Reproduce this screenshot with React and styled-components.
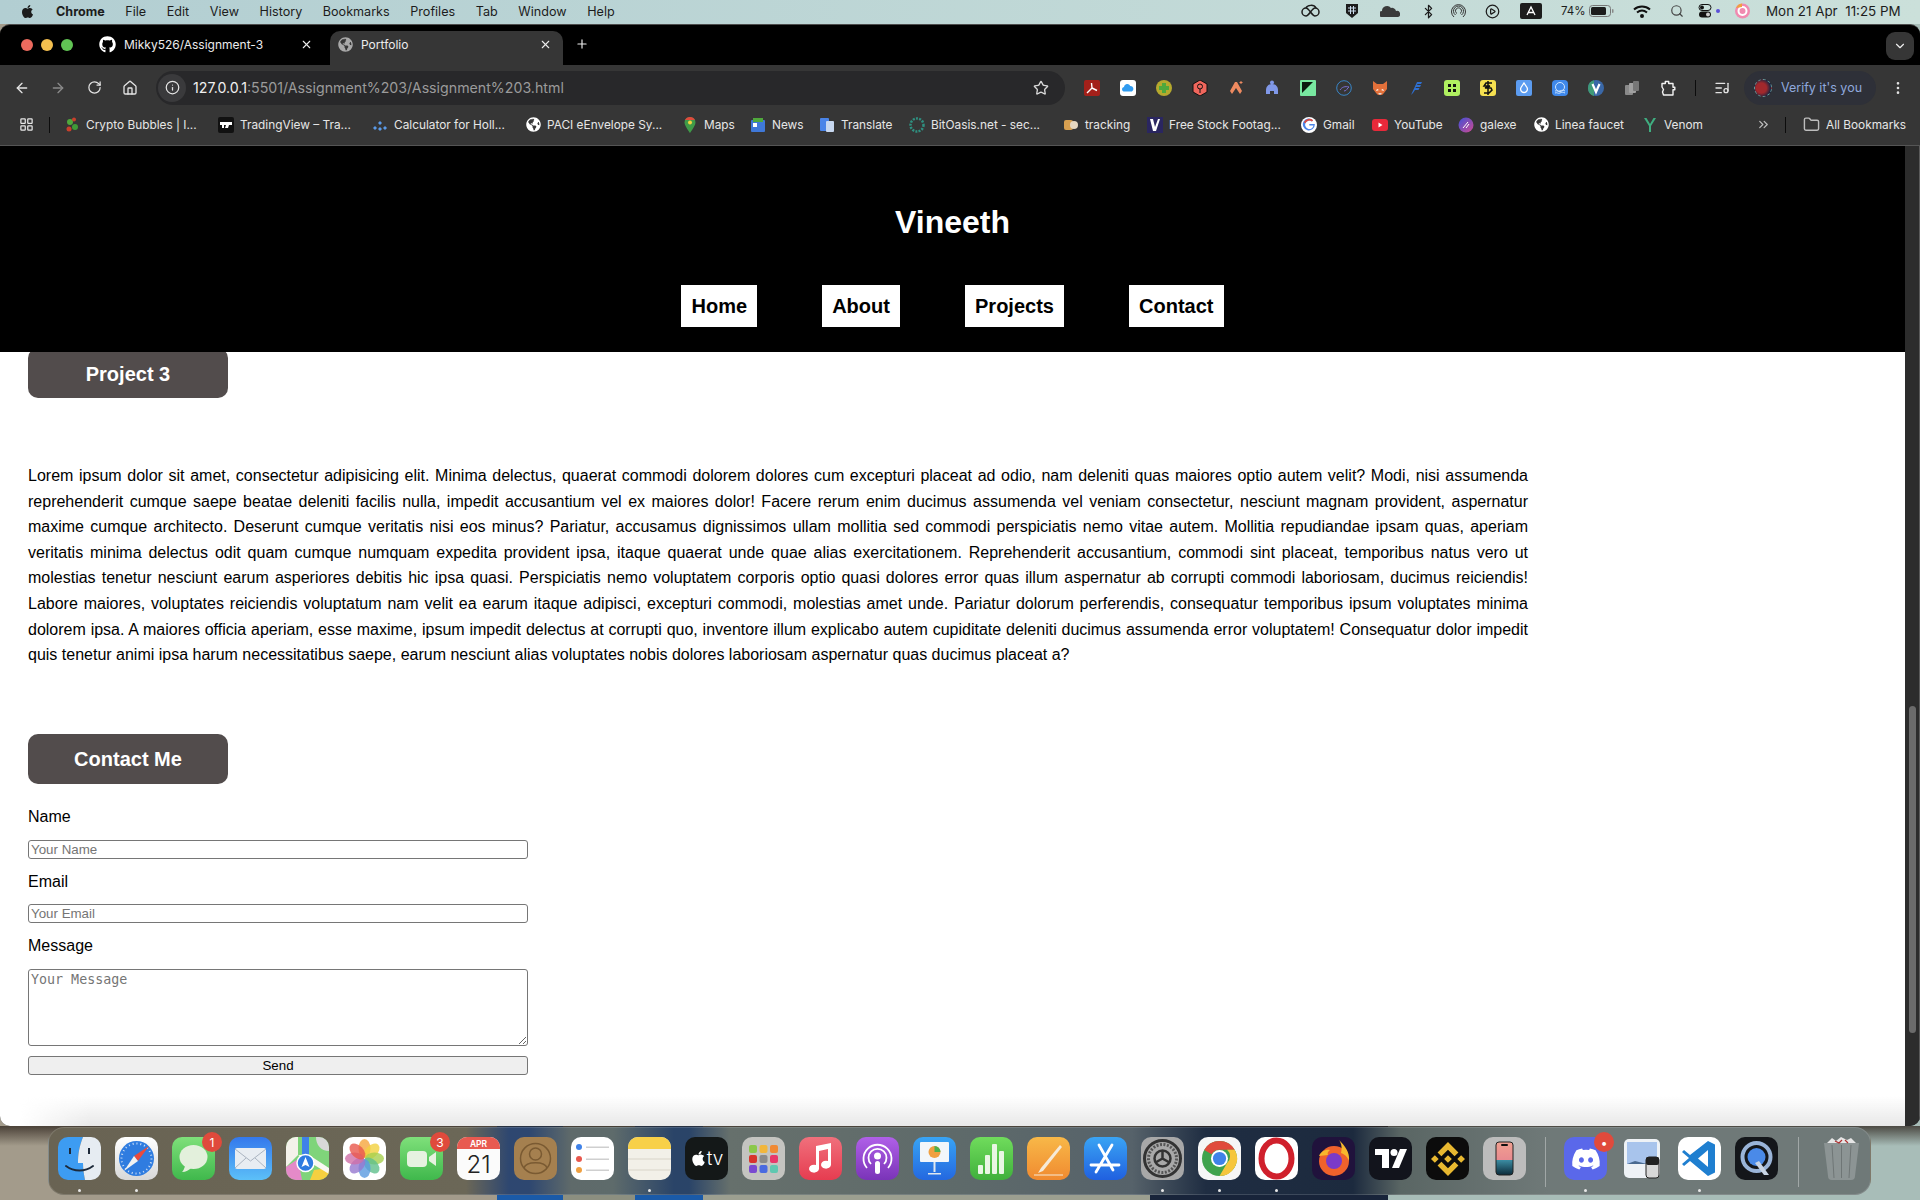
import React from 'react';
import styled, { createGlobalStyle } from 'styled-components';
import { ArrowLeft, ArrowRight, RotateCw, House, Star, Info, Plus, X, ChevronDown, Search, Bluetooth, EllipsisVertical, Folder, ChevronsRight, LayoutGrid, ListMusic, CirclePlay } from 'lucide-react';
import { FaApple, FaGithub, FaDiscord, FaGlobeAmericas } from 'react-icons/fa';
import { SiBinance } from 'react-icons/si';

const GlobalStyle = createGlobalStyle`
  html, body { margin: 0; padding: 0; }
  body { font-family: "Liberation Sans", Arial, sans-serif; background: #000; }
  * { box-sizing: border-box; }
`;

const uiFont = '"Inter", "Liberation Sans", sans-serif';

const Desktop = styled.div`
  width: 1920px;
  height: 1200px;
  overflow: hidden;
  display: flex;
  flex-direction: column;
  background:
    linear-gradient(180deg, rgba(45,35,28,0.75) 0, rgba(45,35,28,0) 20px) 0 1126px / 100% 74px no-repeat,
    linear-gradient(90deg, #a39b8b 0, #a39b8b 497px, #1a5aa8 497px, #1a5aa8 563px, #8c8f80 563px, #8c8f80 635px, #1a5aa8 635px, #1a5aa8 703px, #9c9f90 703px, #9c9f90 1150px, #18243a 1150px, #18243a 1388px, #a8bdb8 1388px);
`;

const MenuBar = styled.div`
  height: 24px;
  flex: none;
  display: flex;
  align-items: center;
  padding: 0 18px 2px 20px;
  background: linear-gradient(90deg, #b2ced2, #cbe0da);
  font-family: ${uiFont};
  font-size: 12.6px;
  color: #1c1c1c;
`;

const MenuItems = styled.div`
  display: flex;
  align-items: center;
  gap: 20.6px;
  margin-left: 21px;
`;

const MenuLabel = styled.span`
  font-weight: ${(p) => (p.$bold ? 700 : 400)};
`;

const StatusArea = styled.div`
  margin-left: auto;
  display: flex;
  align-items: center;
  color: #1c1c1c;
`;

const StatusSlot = styled.span`
  width: ${(p) => p.$w}px;
  flex: none;
  display: flex;
  align-items: center;
  font-size: ${(p) => p.$size || 12.5}px;
  white-space: nowrap;
`;

const Window = styled.div`
  height: 1102px;
  flex: none;
  display: flex;
  flex-direction: column;
  overflow: hidden;
  border-radius: 10px;
  border-top: 1px solid #4d4d4d;
  background: #363636;
`;

const TabStrip = styled.div`
  height: 40px;
  flex: none;
  display: flex;
  align-items: flex-end;
  background: #000;
  padding-left: 21px;
  font-family: ${uiFont};
  font-size: 12px;
  color: #ececec;
`;

const Lights = styled.div`
  display: flex;
  gap: 8px;
  align-self: flex-start;
  margin: 14px 18px 0 0;
`;

const Light = styled.span`
  width: 12px;
  height: 12px;
  border-radius: 50%;
  background: ${(p) => p.$c};
`;

const Tab = styled.div`
  width: 233px;
  height: 34px;
  margin-right: ${(p) => (p.$active ? 12 : 6)}px;
  padding: 0 11px 8px 8px;
  display: flex;
  align-items: center;
  gap: 8px;
  border-radius: 10px 10px 0 0;
  background: ${(p) => (p.$active ? '#363636' : 'transparent')};
`;

const TabTitle = styled.span`
  flex: 1;
  white-space: nowrap;
`;

const NewTab = styled.span`
  display: flex;
  height: 34px;
  padding-bottom: 8px;
  align-items: center;
  color: #eee;
`;

const TabMenu = styled.span`
  margin: 7px 6px 0 auto;
  align-self: flex-start;
  width: 28px;
  height: 28px;
  border-radius: 9px;
  background: #363636;
  display: flex;
  align-items: center;
  justify-content: center;
  color: #eee;
`;

const Toolbar = styled.div`
  height: 43px;
  flex: none;
  display: flex;
  align-items: center;
  padding-left: 4px;
  padding-top: 2px;
  background: #363636;
`;

const ToolBtn = styled.span`
  width: 36px;
  height: 34px;
  flex: none;
  display: flex;
  align-items: center;
  justify-content: center;
  color: ${(p) => p.$c || '#e3e3e3'};
`;

const UrlBar = styled.div`
  width: 909px;
  height: 34px;
  flex: none;
  margin: 0 9px 0 8px;
  padding-left: 2px;
  display: flex;
  align-items: center;
  border-radius: 17px;
  background: #28282a;
  font-family: ${uiFont};
  font-size: 14.2px;
  color: #f0f0f0;
`;

const InfoDot = styled.span`
  width: 28px;
  height: 28px;
  margin-right: 7px;
  border-radius: 50%;
  background: #3a3a3c;
  display: flex;
  align-items: center;
  justify-content: center;
  color: #e3e3e3;
`;

const UrlRest = styled.span`
  color: #9b9b9b;
`;

const UrlStar = styled.span`
  margin-left: auto;
  margin-right: 16px;
  display: flex;
  color: #d8d8d8;
`;

const Divider = styled.span`
  width: 1px;
  height: ${(p) => p.$h || 16}px;
  flex: none;
  margin: ${(p) => p.$m || '0'};
  background: #0c0c0c;
`;

const VerifyPill = styled.div`
  width: 132px;
  height: 34px;
  flex: none;
  margin: 0 4px;
  padding-left: 10px;
  display: flex;
  align-items: center;
  gap: 9px;
  border-radius: 17px;
  background: #2e3038;
  font-family: ${uiFont};
  font-size: 12.5px;
  color: #8fa8dc;
  white-space: nowrap;
`;

const Avatar = styled.span`
  width: 18px;
  height: 18px;
  flex: none;
  border-radius: 50%;
  border: 1px dashed #6aa0a0;
  background: radial-gradient(circle at 40% 50%, #a2282c 40%, #1a2440 75%);
`;

const BookmarkBar = styled.div`
  height: 38px;
  flex: none;
  display: flex;
  align-items: center;
  padding: 0 14px 4px 19px;
  background: #363636;
  border-bottom: 1px solid #555;
  font-family: ${uiFont};
  font-size: 11.85px;
  color: #e6e6e6;
`;

const BookmarkItem = styled.div`
  width: ${(p) => p.$w}px;
  flex: none;
  display: flex;
  align-items: center;
  gap: 6px;
  white-space: nowrap;
`;

const BookmarkRight = styled.div`
  margin-left: auto;
  display: flex;
  align-items: center;
  color: #bdbdbd;
`;

const AllBookmarks = styled.span`
  width: 86px;
  padding-left: 6px;
  color: #e6e6e6;
  white-space: nowrap;
`;

const PageArea = styled.div`
  flex: 1;
  display: flex;
  min-height: 0;
`;

const Page = styled.div`
  flex: 1;
  position: relative;
  overflow: hidden;
  background: #fff;
  color: #000;
  &::after {
    content: '';
    position: absolute;
    left: 0;
    right: 0;
    bottom: 0;
    height: 30px;
    background: linear-gradient(180deg, rgba(232,232,232,0), #e8e8e8);
    -webkit-mask-image: linear-gradient(90deg, transparent 20px, #000 90px);
    mask-image: linear-gradient(90deg, transparent 20px, #000 90px);
  }
`;

const Header = styled.header`
  position: relative;
  z-index: 1;
  height: 206px;
  padding-top: 58px;
  background: #000;
  text-align: center;
`;

const Name = styled.h1`
  margin: 0 0 44px;
  font-size: 32px;
  line-height: 37px;
  font-weight: 700;
  color: #fff;
`;

const Nav = styled.nav`
  display: flex;
  justify-content: center;
  gap: 64.5px;
`;

const NavLink = styled.a`
  height: 42px;
  padding: 0 10.3px;
  display: flex;
  align-items: center;
  background: #fff;
  color: #000;
  font-size: 20px;
  font-weight: 700;
`;

const Main = styled.main`
  margin-top: -4px;
  padding: 0 28px;
`;

const SectionTitle = styled.h2`
  width: 200px;
  height: 50px;
  margin: 0;
  padding-top: 2px;
  display: flex;
  align-items: center;
  justify-content: center;
  border-radius: 10px;
  background: #524c4c;
  color: #fff;
  font-size: 20px;
  font-weight: 700;
`;

const Lorem = styled.p`
  width: 1500px;
  margin: 65px 0 66px;
  font-size: 16px;
  line-height: 25.6px;
  text-align: justify;
`;

const ContactForm = styled.form`
  width: 500px;
  margin-top: 24.5px;
  display: flex;
  flex-direction: column;
`;

const FieldLabel = styled.label`
  height: 18px;
  margin-bottom: 13.5px;
  font-size: 16px;
  line-height: 18px;
`;

const TextField = styled.input`
  width: 100%;
  height: 19px;
  margin: 0 0 14px;
  padding: 1px 2px;
  border: 1px solid #767676;
  border-radius: 3px;
  background: #fff;
  font-family: "Liberation Sans", Arial, sans-serif;
  font-size: 13.33px;
  &::placeholder { color: #757575; }
`;

const MessageField = styled.textarea`
  width: 100%;
  height: 77px;
  margin: 0 0 10px;
  padding: 2px;
  border: 1px solid #767676;
  border-radius: 3px;
  background: #fff;
  font-family: "DejaVu Sans Mono", monospace;
  font-size: 13.33px;
  display: block;
  &::placeholder { color: #757575; }
`;

const SendButton = styled.button`
  width: 100%;
  height: 19px;
  padding: 0;
  border: 1px solid #767676;
  border-radius: 3px;
  background: #efefef;
  color: #000;
  font-family: "Liberation Sans", Arial, sans-serif;
  font-size: 13.33px;
`;

const ScrollTrack = styled.div`
  width: 15px;
  flex: none;
  padding: 560px 3px 0 4px;
  background: #2c2c2c;
  border-right: 1px solid #5a5a5a;
`;

const ScrollThumb = styled.div`
  height: 327px;
  border-radius: 4px;
  background: #6b6b6b;
`;

const Dock = styled.div`
  width: 1823px;
  height: 68px;
  flex: none;
  margin: 1px 0 0 48px;
  padding: 9px 9px 0;
  display: flex;
  gap: 14px;
  border-radius: 16px;
  border: 1px solid rgba(255,255,255,0.14);
  background: linear-gradient(90deg, #696353 0, #6b6757 417px, #2e4770 460px, #2e4770 480px, #5f6a6a 522px, #5e6b6b 564px, #2a4468 625px, #2a4468 640px, #66706c 681px, #5e6a6a 912px, #56626a 1083px, #1f2d42 1157px, #1c2a3e 1304px, #5a6664 1352px, #6f7978 1500px);
`;

const DockIcon = styled.div`
  width: ${(p) => p.$w || 43}px;
  height: 43px;
  flex: none;
  position: relative;
  border-radius: 10px;
  background: ${(p) => p.$bg || 'transparent'};
  display: flex;
  align-items: center;
  justify-content: center;
  color: #fff;
  svg { display: block; }
`;

const ClipBox = styled.div`
  width: 43px;
  height: 43px;
  display: flex;
  align-items: center;
  justify-content: center;
  border-radius: 10px;
  overflow: hidden;
`;

const TvLabel = styled.span`
  font-family: ${uiFont};
  font-size: 19px;
  font-weight: 300;
`;

const Badge = styled.span`
  position: absolute;
  top: -5px;
  right: -7px;
  width: 20px;
  height: 20px;
  border-radius: 50%;
  background: #e04a3c;
  color: #fff;
  font-family: ${uiFont};
  font-size: 12px;
  display: flex;
  align-items: center;
  justify-content: center;
`;

const RunningDot = styled.span`
  position: absolute;
  left: 20px;
  bottom: -12px;
  width: 3px;
  height: 3px;
  border-radius: 50%;
  background: #e8e8e8;
`;

const DockDivider = styled.span`
  width: 1px;
  height: 50px;
  flex: none;
  margin: 0 ${(p) => p.$r}px 0 ${(p) => p.$l}px;
  background: rgba(255,255,255,0.35);
`;

// small toolbar extension icons, 16px square
const Ext = ({ children }) => <svg width="16" height="16" viewBox="0 0 16 16">{children}</svg>;

const extensions = [
  <Ext><rect width="16" height="16" rx="2" fill="#a3201a" /><path d="M3 13 8 8 7.5 3 M8 8l5 2.5" stroke="#fff" strokeWidth="1.4" fill="none" /></Ext>,
  <Ext><rect width="16" height="16" rx="3" fill="#fff" /><path d="M3.5 11.5a2.4 2.4 0 0 1 .4-4.6 3.4 3.4 0 0 1 6.4-1 3 3 0 0 1 1.6 5.6z" fill="#2f9bf0" /></Ext>,
  <Ext><circle cx="8" cy="8" r="8" fill="#b6a92e" /><path d="M6 3h4v3h3v4h-3v3H6v-3H3V6h3z" fill="#4fa83c" /></Ext>,
  <Ext><path d="M8 0l7 4v8l-7 4-7-4V4z" fill="#f0665c" stroke="#111" /><circle cx="8" cy="6.5" r="2.5" fill="none" stroke="#111" /><path d="M8 9v4" stroke="#111" /></Ext>,
  <Ext><path d="M7 2h2l5 9-2 3-4-6-4 6-2-3z" fill="#ee8a60" /><path d="M13 1v3M11.5 2.5h3" stroke="#ee8a60" /></Ext>,
  <Ext><path d="M8 4c4 0 6 3 6 6v4h-4v-3H6v3H2v-4c0-3 2-6 6-6z" fill="#8098e8" /><circle cx="8" cy="2.5" r="2" fill="#8098e8" /></Ext>,
  <Ext><rect width="16" height="16" rx="1" fill="#78e8a0" /><path d="M2 2h11L2 13z" fill="#0c1a10" /></Ext>,
  <Ext><circle cx="8" cy="8" r="7.3" fill="none" stroke="#3a86c8" /><path d="M4 10c2-3 5-4 9-3-2 1-2 4-5 4" fill="none" stroke="#7a6ed0" /></Ext>,
  <Ext><path d="M1 1l4 3h6l4-3v8l-3 4-2 2H6l-2-2-3-4z" fill="#e2703a" /><path d="M5 9l2 1-3 1zM11 9 9 10l3 1z" fill="#fff" /><path d="M6 13h4l-2 2z" fill="#ddd" /></Ext>,
  <Ext><path d="M3 15 9 2h5l-1 2H9.5L9 5h4l-1 2H8L7.5 8h4l-1 2H7l-2 3z" fill="#2e6fd0" /></Ext>,
  <Ext><rect width="16" height="16" rx="3" fill="#b0f060" /><path d="M4 4h3v3H4zM9 4h3v3H9zM4 9h3v3H4zM9 9h3v3H9z" fill="#111" /></Ext>,
  <Ext><rect width="16" height="16" rx="3" fill="#f5e050" /><path d="M12 3H6L4 6h6l-5 2h6l1 2-3 3H4M8 1v14" stroke="#111" strokeWidth="1.5" fill="none" /></Ext>,
  <Ext><rect width="16" height="16" rx="2" fill="#5c9cf0" /><path d="M8 3l3 4.5a3.4 3.4 0 1 1-6 0z" fill="none" stroke="#fff" strokeWidth="1.3" /></Ext>,
  <Ext><rect width="16" height="16" rx="4" fill="#3f88ea" /><circle cx="8" cy="7" r="4.5" fill="none" stroke="#cfe6ff" /><path d="M3 11c2-1 3 1 5 0s3-1 5 0M3 13c2-1 3 1 5 0s3-1 5 0" stroke="#cfe6ff" fill="none" /></Ext>,
  <Ext><circle cx="8" cy="8" r="8" fill="#3a68a8" /><path d="M0 8a8 8 0 0 1 6-7.7V16A8 8 0 0 1 0 8z" fill="#3f9a78" /><path d="M4.5 4 8 12l3.5-8" stroke="#fff" strokeWidth="2.2" fill="none" /></Ext>,
  <Ext><rect x="1" y="5" width="8" height="10" rx="1" fill="#8a8a8a" /><rect x="5" y="3" width="7" height="10" rx="1" fill="#a0a0a0" /><rect x="9" y="1" width="6" height="10" rx="1" fill="#777" /></Ext>,
];

// Chrome's own extensions button: square with a knob on top and on the right
const PuzzleIcon = () => (
  <svg width="16" height="16" viewBox="0 0 16 16" fill="none" stroke="#f2f2f2" strokeWidth="1.4" strokeLinejoin="round">
    <path d="M2 3.500h3.300V1.500h3.400v2H13v3.700h1.800v2.600H13V15H3.500l-1-3 1-2.500L2 7z" />
  </svg>
);

const Tv = () => (
  <svg width="16" height="16" viewBox="0 0 16 16"><rect width="16" height="16" rx="2" fill="#111" /><path d="M2 5h12v3H11l-1 3H7l1-3H6v3H4V8H2z" fill="#fff" /></svg>
);

const bookmarks = [
  { w: 154, label: 'Crypto Bubbles | I...', icon: <Ext><circle cx="6" cy="5" r="3" fill="#4fa83c" /><circle cx="11" cy="10" r="3" fill="#3f9a38" /><circle cx="5" cy="12" r="2.5" fill="#c8402c" /><circle cx="10" cy="2.5" r="2" fill="#c8402c" /></Ext> },
  { w: 154, label: 'TradingView – Tra...', icon: <Tv /> },
  { w: 154, label: 'Calculator for Holl...', icon: <Ext><path d="M8 4l2 2-2 2-2-2zM3 9l2 2-2 2-2-2zM13 9l2 2-2 2-2-2zM8 10l2 2-2 2-2-2z" fill="#5a9ae8" /></Ext> },
  { w: 156, label: 'PACI eEnvelope Sy...', icon: <FaGlobeAmericas size={15} color="#fff" /> },
  { w: 68, label: 'Maps', icon: <Ext><path d="M8 0a5.500 5.500 0 0 1 5.500 5.500C13.500 9 8 16 8 16S2.500 9 2.500 5.500A5.500 5.500 0 0 1 8 0z" fill="#3f9a48" /><path d="M8 0a5.500 5.500 0 0 1 5 3L3 3a5.500 5.500 0 0 1 5-3z" fill="#e04a3c" /><circle cx="8" cy="5.500" r="2" fill="#f5d040" /></Ext> },
  { w: 69, label: 'News', icon: <Ext><rect x="1" y="3" width="14" height="12" rx="1" fill="#3f78d8" /><rect x="3" y="1" width="10" height="4" fill="#4fa83c" /><rect x="3" y="6" width="4" height="4" fill="#fff" /></Ext> },
  { w: 90, label: 'Translate', icon: <Ext><rect x="1" y="1" width="9" height="13" rx="1" fill="#4a84e8" /><rect x="7" y="4" width="8" height="11" rx="1" fill="#c8d8f0" /></Ext> },
  { w: 154, label: 'BitOasis.net - sec...', icon: <Ext><circle cx="8" cy="8" r="6.500" fill="none" stroke="#2f9080" strokeWidth="2.500" strokeDasharray="2 1.200" /></Ext> },
  { w: 84, label: 'tracking', icon: <Ext><rect x="1" y="3" width="9" height="10" rx="2" fill="#d8a050" /><circle cx="11" cy="8" r="4" fill="#e8d8c0" /></Ext> },
  { w: 154, label: 'Free Stock Footag...', icon: <Ext><rect width="16" height="16" fill="#2a2660" /><path d="M3 2h3l2 8 3-8h2l-4 12H6z" fill="#fff" /></Ext> },
  { w: 71, label: 'Gmail', icon: <Ext><circle cx="8" cy="8" r="8" fill="#fff" /><path d="M12.500 8.500H8.300V7h5.500a6 6 0 1 1-1.700-3.800l-1.200 1.200A4.200 4.200 0 1 0 12.500 8.500z" fill="#4a84e8" /><path d="M2.800 5.200A6 6 0 0 1 12.100 3.200l-1.200 1.200a4.200 4.200 0 0 0-6.500 1.800z" fill="#e04a3c" /></Ext> },
  { w: 86, label: 'YouTube', icon: <Ext><rect y="2" width="16" height="12" rx="3" fill="#e8293a" /><path d="M6.500 5.500v5l4-2.500z" fill="#fff" /></Ext> },
  { w: 76, label: 'galexe', icon: <Ext><defs><linearGradient id="gx" x1="0" y1="0" x2="1" y2="1"><stop stopColor="#3f50d8" /><stop offset="1" stopColor="#d04a90" /></linearGradient></defs><circle cx="8" cy="8" r="7.500" fill="url(#gx)" /><path d="M5 11l5-6M8 11l3-4" stroke="#fff" /></Ext> },
  { w: 108, label: 'Linea faucet', icon: <FaGlobeAmericas size={15} color="#fff" /> },
  { w: 79, label: 'Venom', icon: <Ext><path d="M2 1l5 8v6h2V9l5-8h-2.500L8 7 4.500 1z" fill="#3fae80" /></Ext> },
];

const bubble = 'linear-gradient(180deg, #7fe07a, #3fb84c)';

const FinderArt = () => (
  <svg width="43" height="43" viewBox="0 0 43 43">
    <path d="M0 0h25c-4 10-5 18-5 26h5c0 6 1 12 2 17H0z" fill="#3d9cf2" />
    <path d="M25 0h18v43H27c-1-5-2-11-2-17h-5c0-8 1-16 5-26z" fill="#e6ecf2" />
    <path d="M12 11v6M31 11v6" stroke="#1d2a3a" strokeWidth="2" />
    <path d="M8 29c8 6 19 6 27 0" fill="none" stroke="#1d2a3a" strokeWidth="2" strokeLinecap="round" />
  </svg>
);

const SafariArt = () => (
  <svg width="43" height="43" viewBox="0 0 43 43">
    <circle cx="21.500" cy="21.500" r="17.500" fill="#2f7ce0" />
    <circle cx="21.500" cy="21.500" r="15" fill="none" stroke="#cfe0f5" strokeWidth="2" strokeDasharray="1 2.900" />
    <path d="M34 9 19 19l4 5z" fill="#ea4a3c" />
    <path d="M9 34l10-15 4 5z" fill="#f2f2f2" />
  </svg>
);

const MessagesArt = () => (
  <svg width="43" height="43" viewBox="0 0 43 43">
    <ellipse cx="21.500" cy="20" rx="14" ry="12" fill="#e3f0dc" />
    <path d="M13 28c0 3-2 6-3 7 4 0 7-2 9-4z" fill="#e3f0dc" />
  </svg>
);

const MailArt = () => (
  <svg width="43" height="43" viewBox="0 0 43 43">
    <rect x="6" y="11" width="31" height="21" rx="2" fill="#e8edf2" />
    <path d="M6 12l15.500 12L37 12M6 31l11-10M37 31 26 21" fill="none" stroke="#aab4c0" />
  </svg>
);

const MapsArt = () => (
  <svg width="43" height="43" viewBox="0 0 43 43">
    <rect width="43" height="43" fill="#7fd47a" />
    <path d="M0 0h12v18L0 30z" fill="#f4f2ea" />
    <path d="M30 0h13v14c-8 0-13-6-13-14z" fill="#d8d8d8" />
    <path d="M0 30l12-8 4 21H0z" fill="#e48ac8" />
    <path d="M24 43l4-10 15-2v12z" fill="#f5d040" />
    <path d="M16 0h7v18h-7z" fill="#3f82e8" />
    <path d="M12 18 43 37v-6L23 18z" fill="#f8f8f2" />
    <circle cx="19.500" cy="26" r="8.500" fill="#2f7ce0" stroke="#fff" strokeWidth="1.500" />
    <path d="M19.500 20l4 10-4-2-4 2z" fill="#fff" />
  </svg>
);

const PhotosArt = () => {
  const petals = ['#f6a63c', '#f3d13e', '#a6cf4e', '#5fbf8c', '#5a9ae0', '#9678cf', '#cf6fa8', '#e8574c'];
  return (
    <svg width="43" height="43" viewBox="0 0 43 43">
      {petals.map((c, i) => (
        <ellipse key={c} cx="21.500" cy="11.500" rx="6" ry="9.500" fill={c} opacity="0.8" transform={`rotate(${i * 45} 21.500 21.500)`} />
      ))}
    </svg>
  );
};

const FaceTimeArt = () => (
  <svg width="43" height="43" viewBox="0 0 43 43">
    <rect x="7" y="14" width="20" height="16" rx="4" fill="#e6f2e0" />
    <path d="M29 20l7-5v14l-7-5z" fill="#e6f2e0" />
  </svg>
);

const CalendarArt = () => (
  <svg width="43" height="43" viewBox="0 0 43 43">
    <rect width="43" height="12" fill="#e85a50" />
    <text x="21.500" y="10" textAnchor="middle" fontFamily="Inter, sans-serif" fontSize="8.500" fontWeight="600" fill="#fff">APR</text>
    <text x="21.500" y="36" textAnchor="middle" fontFamily="Inter, sans-serif" fontSize="24" fontWeight="300" fill="#222">21</text>
  </svg>
);

const ContactsArt = () => (
  <svg width="43" height="43" viewBox="0 0 43 43">
    <circle cx="21.500" cy="21.500" r="15" fill="none" stroke="#7a5a32" strokeWidth="1.500" />
    <circle cx="21.500" cy="17" r="6" fill="none" stroke="#7a5a32" strokeWidth="1.500" />
    <path d="M10 31c2-7 21-7 23 0" fill="none" stroke="#7a5a32" strokeWidth="1.500" />
  </svg>
);

const RemindersArt = () => (
  <svg width="43" height="43" viewBox="0 0 43 43">
    {[['#3f82e8', 10], ['#e8574c', 22], ['#f0a040', 33]].map(([c, y]) => (
      <g key={c}>
        <circle cx="8" cy={y} r="3" fill={c} />
        <rect x="15" y={y - 0.5} width="23" height="1.500" fill="#cfcfcf" />
      </g>
    ))}
  </svg>
);

const NotesArt = () => (
  <svg width="43" height="43" viewBox="0 0 43 43">
    <rect width="43" height="12" fill="#f8d048" />
    <path d="M0 22h43M0 33h43" stroke="#d8d4c8" />
  </svg>
);

const LaunchpadArt = () => {
  const cells = ['#8bc84a', '#f2b63c', '#f08a34', '#d8342c', '#8a8a8a', '#e8386a', '#7a4ad0', '#4a6ae0', '#5fc8b0'];
  return (
    <svg width="43" height="43" viewBox="0 0 43 43">
      {cells.map((c, i) => (
        <rect key={c} x={7 + (i % 3) * 10.5} y={8 + Math.floor(i / 3) * 10} width="8" height="8" rx="2" fill={c} />
      ))}
    </svg>
  );
};

const MusicArt = () => (
  <svg width="43" height="43" viewBox="0 0 43 43">
    <path d="M17 9l15-3v22a5 4 0 1 1-3-4V12l-9 2v18a5 4 0 1 1-3-4z" fill="#fff" />
  </svg>
);

const PodcastArt = () => (
  <svg width="43" height="43" viewBox="0 0 43 43" fill="none" stroke="#fff" strokeWidth="1.800">
    <path d="M11 31a14 14 0 1 1 21 0" />
    <path d="M15 27a9 9 0 1 1 13 0" />
    <circle cx="21.500" cy="19" r="3.500" fill="#fff" stroke="none" />
    <rect x="19" y="24" width="5" height="13" rx="2.500" fill="#fff" stroke="none" />
  </svg>
);

const KeynoteArt = () => (
  <svg width="43" height="43" viewBox="0 0 43 43">
    <rect x="7" y="5" width="29" height="20" rx="1" fill="#f2f6fa" />
    <circle cx="21.500" cy="15" r="6" fill="#f0a040" />
    <path d="M21.500 15V9a6 6 0 0 1 6 6z" fill="#4fb04c" />
    <path d="M20.500 25h2v10h-2zM15 36h13v1.500H15z" fill="#dfe8f0" />
  </svg>
);

const NumbersArt = () => (
  <svg width="43" height="43" viewBox="0 0 43 43" fill="#e9f6e4">
    <rect x="8" y="28" width="5" height="9" rx="1" />
    <rect x="15" y="18" width="5" height="19" rx="1" />
    <rect x="22" y="7" width="5" height="30" rx="1" />
    <rect x="29" y="14" width="5" height="23" rx="1" />
  </svg>
);

const PagesArt = () => (
  <svg width="43" height="43" viewBox="0 0 43 43">
    <path d="M33 8 14 31l-3 5 5-2 19-24z" fill="#f6ead8" />
    <path d="M7 38h29" stroke="#f6ead8" strokeWidth="1.200" />
  </svg>
);

const AppStoreArt = () => (
  <svg width="43" height="43" viewBox="0 0 43 43" fill="none" stroke="#fff" strokeWidth="2.800" strokeLinecap="round">
    <path d="M15 8l14 25M28 8 12 35M7 28h28" />
  </svg>
);

const SettingsArt = () => (
  <svg width="43" height="43" viewBox="0 0 43 43" fill="none">
    <circle cx="21.500" cy="21.500" r="18" stroke="#333" strokeWidth="3" />
    <circle cx="21.500" cy="21.500" r="14" stroke="#555" strokeWidth="3" strokeDasharray="2 1.500" />
    <circle cx="21.500" cy="21.500" r="8" stroke="#333" strokeWidth="2.500" />
    <path d="M21.500 13.500v8l7 4M21.500 21.500l-7 4" stroke="#333" strokeWidth="2.500" />
  </svg>
);

const ChromeArt = () => (
  <svg width="43" height="43" viewBox="0 0 43 43">
    <circle cx="21.500" cy="21.500" r="17.500" fill="#3fa34d" />
    <path d="M21.500 4a17.500 17.500 0 0 1 15.200 8.700H21.500a8.800 8.800 0 0 0-7.800 4.500L6.200 12.900A17.500 17.500 0 0 1 21.500 4z" fill="#e04a3c" />
    <path d="M36.700 12.700A17.500 17.500 0 0 1 21.500 39l7.600-13.100a8.800 8.800 0 0 0 0-13.200z" fill="#f6c63c" />
    <circle cx="21.500" cy="21.500" r="8.500" fill="#fff" />
    <circle cx="21.500" cy="21.500" r="6.600" fill="#3f82e8" />
  </svg>
);

const OperaArt = () => (
  <svg width="43" height="43" viewBox="0 0 43 43">
    <ellipse cx="21.500" cy="21.500" rx="15" ry="18" fill="none" stroke="#d0202c" strokeWidth="6" />
  </svg>
);

const FirefoxArt = () => (
  <svg width="43" height="43" viewBox="0 0 43 43">
    <circle cx="22" cy="24" r="15" fill="#f0622c" />
    <path d="M27 3c6 6 11 12 10 21-2-5-5-7-8-8 1-4 1-9-2-13z" fill="#f8b82c" />
    <path d="M7 19c2-5 7-7 11-6-2 2-3 3-2 5z" fill="#f8b82c" />
    <circle cx="22" cy="24" r="8" fill="#7a3ac8" />
  </svg>
);

const TradingArt = () => (
  <svg width="43" height="43" viewBox="0 0 43 43" fill="#fff">
    <path d="M6 12h14v19h-7V18H6z" />
    <circle cx="25" cy="15.500" r="3.500" />
    <path d="M31 12h7l-8 19h-7z" />
  </svg>
);

const IphoneArt = () => (
  <svg width="43" height="43" viewBox="0 0 43 43">
    <defs><linearGradient id="ph" x1="0" y1="0" x2="0" y2="1"><stop stopColor="#f0a090" /><stop offset="0.55" stopColor="#e88a90" /><stop offset="0.56" stopColor="#3a8aa0" /><stop offset="1" stopColor="#0c2a3a" /></linearGradient></defs>
    <rect x="13" y="5" width="17" height="33" rx="3" fill="url(#ph)" stroke="#222" />
    <rect x="18" y="7" width="7" height="2" rx="1" fill="#111" />
  </svg>
);

const PreviewArt = () => (
  <svg width="43" height="43" viewBox="0 0 43 43">
    <rect x="3" y="2" width="36" height="39" rx="5" fill="#eef2f6" />
    <rect x="6" y="5" width="30" height="22" fill="#a8c4ec" />
    <path d="M6 27l8-3 12 3z" fill="#4a6a90" />
    <rect x="25" y="20" width="13" height="21" rx="3" fill="#d8d8d8" stroke="#222" />
    <rect x="25" y="20" width="13" height="8" rx="2" fill="#222" />
  </svg>
);

const VscodeArt = () => (
  <svg width="43" height="43" viewBox="0 0 43 43">
    <path d="M30 4l7 3.500v28L30 39 12 24l-6 5-2-2 7-6-7-6 2-2 6 5z" fill="#1f7fd0" />
    <path d="M30 13v17l-10-8.500z" fill="#fff" />
  </svg>
);

const QuickTimeArt = () => (
  <svg width="43" height="43" viewBox="0 0 43 43">
    <circle cx="21.500" cy="20" r="14" fill="none" stroke="#9ab4d8" strokeWidth="4" />
    <circle cx="21.500" cy="20" r="9" fill="#4a8ae8" />
    <path d="M24 24l10 14h-5l-9-12z" fill="#c8d4e4" />
  </svg>
);

const TrashArt = () => (
  <svg width="37" height="43" viewBox="0 0 37 43">
    <path d="M1 6h35l-4 33a4 4 0 0 1-4 4H9a4 4 0 0 1-4-4z" fill="#8c9494" />
    <path d="M9 8l2 33M18.500 8v33M28 8l-2 33" stroke="#6f7676" />
    <path d="M4 6l5-5 4 3 5-4 6 3 4-2 5 5z" fill="#e6e6e6" />
    <path d="M12 4l4 2 3-3M22 3l3 3" stroke="#b03030" strokeWidth="1.200" fill="none" />
  </svg>
);

const dockApps = [
  { art: <FinderArt />, dot: true },
  { art: <SafariArt />, bg: 'linear-gradient(180deg, #fff, #d8d8d8)', dot: true },
  { art: <MessagesArt />, bg: bubble, badge: '1' },
  { art: <MailArt />, bg: 'linear-gradient(180deg, #3478ec, #5cc0f8)' },
  { art: <MapsArt /> },
  { art: <PhotosArt />, bg: '#fff' },
  { art: <FaceTimeArt />, bg: bubble, badge: '3' },
  { art: <CalendarArt />, bg: '#fbfbfb' },
  { art: <ContactsArt />, bg: '#a5804f' },
  { art: <RemindersArt />, bg: '#fff' },
  { art: <NotesArt />, bg: '#f2f0e8', dot: true },
  { art: <><FaApple size={17} color="#fff" /><TvLabel>tv</TvLabel></>, bg: '#141818' },
  { art: <LaunchpadArt />, bg: '#c4c4c0' },
  { art: <MusicArt />, bg: 'linear-gradient(180deg, #f0707c, #e63c50)' },
  { art: <PodcastArt />, bg: 'linear-gradient(180deg, #b060e8, #7a34b8)' },
  { art: <KeynoteArt />, bg: 'linear-gradient(180deg, #38a4f4, #2468e0)' },
  { art: <NumbersArt />, bg: 'linear-gradient(180deg, #70dc5c, #40b03c)' },
  { art: <PagesArt />, bg: 'linear-gradient(180deg, #f8b848, #f08a30)' },
  { art: <AppStoreArt />, bg: 'linear-gradient(180deg, #3aa4f4, #2060e0)' },
  { art: <SettingsArt />, bg: '#a8a8a8', dot: true },
  { art: <ChromeArt />, bg: '#f6f6f6', dot: true },
  { art: <OperaArt />, bg: '#fff', dot: true },
  { art: <FirefoxArt />, bg: '#20123c' },
  { art: <TradingArt />, bg: '#12141c' },
  { art: <SiBinance size={34} color="#e8b830" />, bg: '#0c0c0c' },
  { art: <IphoneArt />, bg: '#bcbcbc' },
];

const pinnedApps = [
  { art: <FaDiscord size={30} color="#fff" />, bg: '#5a68ea', badge: '•', dot: true },
  { art: <PreviewArt /> },
  { art: <VscodeArt />, bg: '#fff', dot: true },
  { art: <QuickTimeArt />, bg: '#14161a' },
];

const renderApp = (app, i) => (
  <DockIcon key={i} $bg={app.bg}>
    <ClipBox>{app.art}</ClipBox>
    {app.badge && <Badge>{app.badge}</Badge>}
    {app.dot && <RunningDot />}
  </DockIcon>
);

const menus = ['File', 'Edit', 'View', 'History', 'Bookmarks', 'Profiles', 'Tab', 'Window', 'Help'];

const lorem = `Lorem ipsum dolor sit amet, consectetur adipisicing elit. Minima delectus, quaerat commodi dolorem dolores cum excepturi placeat ad odio, nam deleniti quas maiores optio autem velit? Modi, nisi assumenda reprehenderit cumque saepe beatae deleniti facilis nulla, impedit accusantium vel ex maiores dolor! Facere rerum enim ducimus assumenda vel veniam consectetur, nesciunt magnam provident, aspernatur maxime cumque architecto. Deserunt cumque veritatis nisi eos minus? Pariatur, accusamus dignissimos ullam mollitia sed commodi perspiciatis nemo vitae autem. Mollitia repudiandae ipsam quas, aperiam veritatis minima delectus odit quam cumque numquam expedita provident ipsa, itaque quaerat unde quae alias exercitationem. Reprehenderit accusantium, commodi sint placeat, temporibus natus vero ut molestias tenetur nesciunt earum asperiores debitis hic ipsa quasi. Perspiciatis nemo voluptatem corporis optio quasi dolores error quas illum aspernatur ab corrupti commodi laboriosam, ducimus reiciendis! Labore maiores, voluptates reiciendis voluptatum nam velit ea earum itaque adipisci, excepturi commodi, molestias amet unde. Pariatur dolorum perferendis, consequatur temporibus ipsum voluptates minima dolorem ipsa. A maiores officia aperiam, esse maxime, ipsum impedit delectus at corrupti quo, inventore illum explicabo autem cupiditate deleniti ducimus assumenda error voluptatem! Consequatur dolor impedit quis tenetur animi ipsa harum necessitatibus saepe, earum nesciunt alias voluptates nobis dolores laboriosam aspernatur quas ducimus placeat a?`;

export default function App() {
  return (
    <Desktop>
      <GlobalStyle />
      <MenuBar>
        <FaApple size={15} />
        <MenuItems>
          <MenuLabel $bold>Chrome</MenuLabel>
          {menus.map((m) => <MenuLabel key={m}>{m}</MenuLabel>)}
        </MenuItems>
        <StatusArea>
          <StatusSlot $w={44}>
            <svg width="20" height="14" viewBox="0 0 20 14" fill="none" stroke="#1c1c1c" strokeWidth="1.500"><path d="M5 12a4 4 0 0 1 0-8c3 0 6 8 9 8a4 4 0 0 0 0-8c-3 0-6 8-9 8z" /><path d="M5 4c1-3 8-4 10 0" /></svg>
          </StatusSlot>
          <StatusSlot $w={35}>
            <svg width="14" height="16" viewBox="0 0 14 16"><path d="M1 1h12v9l-6 5-6-5z" fill="#1c1c1c" /><path d="M3 5h8M3 8h8M5.500 3v8M8.500 3v8" stroke="#cde" /></svg>
          </StatusSlot>
          <StatusSlot $w={41}>
            <svg width="20" height="12" viewBox="0 0 20 12"><path d="M2 12a3 3 0 0 1 0-6 5 5 0 0 1 9-3 4 4 0 0 1 5 3 3 3 0 0 1 2 6z" fill="#3a3a3a" /></svg>
          </StatusSlot>
          <StatusSlot $w={30}><Bluetooth size={15} /></StatusSlot>
          <StatusSlot $w={34}>
            <svg width="15" height="15" viewBox="0 0 15 15" fill="none" stroke="#333"><path d="M3 13a7 7 0 1 1 9 0" /><path d="M4.500 11a5 5 0 1 1 6 0" /><path d="M6 9.500a3 3 0 1 1 3 0" /></svg>
          </StatusSlot>
          <StatusSlot $w={35}><CirclePlay size={15} /></StatusSlot>
          <StatusSlot $w={41}>
            <svg width="22" height="16" viewBox="0 0 22 16"><rect width="22" height="16" rx="2" fill="#1c1c1c" /><path d="M7 12l4-8 4 8M8.500 9.500h5" stroke="#fff" strokeWidth="1.300" fill="none" /></svg>
          </StatusSlot>
          <StatusSlot $w={28} $size={11.5}>74%</StatusSlot>
          <StatusSlot $w={44}>
            <svg width="25" height="12" viewBox="0 0 25 12"><rect x="0.500" y="0.500" width="21" height="11" rx="3" fill="none" stroke="#777" /><rect x="2" y="2" width="15" height="8" rx="1.500" fill="#1c1c1c" /><rect x="23" y="4" width="1.500" height="4" rx="1" fill="#888" /></svg>
          </StatusSlot>
          <StatusSlot $w={37}>
            <svg width="18" height="13" viewBox="0 0 18 13" fill="none" stroke="#111" strokeWidth="2"><path d="M1 4.500c4.500-4 11.500-4 16 0M4 7.500c3-2.500 7-2.500 10 0" /><circle cx="9" cy="11" r="1" fill="#111" /></svg>
          </StatusSlot>
          <StatusSlot $w={28}><Search size={14} color="#444" /></StatusSlot>
          <StatusSlot $w={37}>
            <svg width="22" height="14" viewBox="0 0 22 14"><rect x="1" y="0.500" width="12" height="6" rx="3" fill="none" stroke="#111" /><circle cx="4" cy="3.500" r="2" fill="#111" /><rect x="1" y="7.500" width="12" height="6" rx="3" fill="#111" /><circle cx="10" cy="10.500" r="2" fill="#ccc" /><circle cx="20" cy="7" r="2" fill="#5a50d8" /></svg>
          </StatusSlot>
          <StatusSlot $w={31}>
            <svg width="15" height="16" viewBox="0 0 15 16"><circle cx="7.500" cy="8" r="7.500" fill="#f08ab0" /><circle cx="7.500" cy="8" r="4" fill="none" stroke="#fff" strokeWidth="2" /><path d="M1 5a7 7 0 0 1 6-4.500V4z" fill="#f0a040" /></svg>
          </StatusSlot>
          <StatusSlot $w={136} $size={13.4}>Mon 21 Apr&nbsp;&nbsp;11:25 PM</StatusSlot>
        </StatusArea>
      </MenuBar>

      <Window>
        <TabStrip>
          <Lights>
            <Light $c="#ec6a5e" />
            <Light $c="#f4bf4f" />
            <Light $c="#61c554" />
          </Lights>
          <Tab>
            <FaGithub size={17} color="#fff" />
            <TabTitle>Mikky526/Assignment-3</TabTitle>
            <X size={13} />
          </Tab>
          <Tab $active>
            <FaGlobeAmericas size={15} color="#a8a8a8" />
            <TabTitle>Portfolio</TabTitle>
            <X size={13} />
          </Tab>
          <NewTab><Plus size={14} /></NewTab>
          <TabMenu><ChevronDown size={14} /></TabMenu>
        </TabStrip>

        <Toolbar>
          <ToolBtn><ArrowLeft size={16} /></ToolBtn>
          <ToolBtn $c="#8a8a8a"><ArrowRight size={16} /></ToolBtn>
          <ToolBtn><RotateCw size={15} /></ToolBtn>
          <ToolBtn><House size={16} /></ToolBtn>
          <UrlBar>
            <InfoDot><Info size={15} /></InfoDot>
            127.0.0.1<UrlRest>:5501/Assignment%203/Assignment%203.html</UrlRest>
            <UrlStar><Star size={16} /></UrlStar>
          </UrlBar>
          {extensions.map((e, i) => <ToolBtn key={i}>{e}</ToolBtn>)}
          <ToolBtn><PuzzleIcon /></ToolBtn>
          <Divider $h={16} $m="0 8px 0 9px" />
          <ToolBtn><ListMusic size={16} /></ToolBtn>
          <VerifyPill><Avatar />Verify it's you</VerifyPill>
          <ToolBtn><EllipsisVertical size={16} /></ToolBtn>
        </Toolbar>

        <BookmarkBar>
          <LayoutGrid size={15} />
          <Divider $h={16} $m="0 14px 0 15px" />
          {bookmarks.map((b) => (
            <BookmarkItem key={b.label} $w={b.w}>{b.icon}{b.label}</BookmarkItem>
          ))}
          <BookmarkRight>
            <ChevronsRight size={15} />
            <Divider $h={16} $m="0 17px 0 14px" />
            <Folder size={17} />
            <AllBookmarks>All Bookmarks</AllBookmarks>
          </BookmarkRight>
        </BookmarkBar>

        <PageArea>
          <Page>
            <Header>
              <Name>Vineeth</Name>
              <Nav>
                <NavLink>Home</NavLink>
                <NavLink>About</NavLink>
                <NavLink>Projects</NavLink>
                <NavLink>Contact</NavLink>
              </Nav>
            </Header>
            <Main>
              <SectionTitle>Project 3</SectionTitle>
              <Lorem>{lorem}</Lorem>
              <SectionTitle>Contact Me</SectionTitle>
              <ContactForm onSubmit={(e) => e.preventDefault()}>
                <FieldLabel>Name</FieldLabel>
                <TextField placeholder="Your Name" />
                <FieldLabel>Email</FieldLabel>
                <TextField placeholder="Your Email" />
                <FieldLabel>Message</FieldLabel>
                <MessageField placeholder="Your Message" />
                <SendButton>Send</SendButton>
              </ContactForm>
            </Main>
          </Page>
          <ScrollTrack><ScrollThumb /></ScrollTrack>
        </PageArea>
      </Window>

      <Dock>
        {dockApps.map(renderApp)}
        <DockDivider $l={5} $r={4} />
        {pinnedApps.map(renderApp)}
        <DockDivider $l={6} $r={10} />
        <DockIcon $w={37}><TrashArt /></DockIcon>
      </Dock>
    </Desktop>
  );
}
